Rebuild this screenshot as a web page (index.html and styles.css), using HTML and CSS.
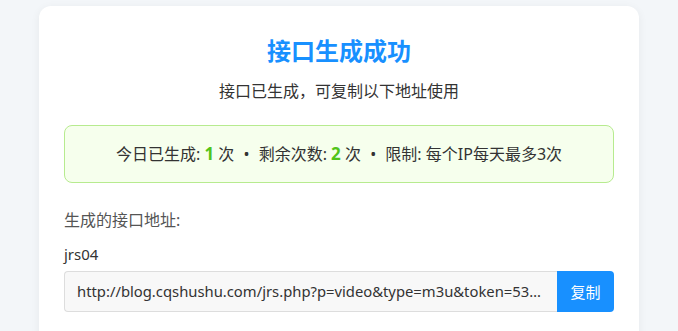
FILE: index.html
```html
<!DOCTYPE html>
<html lang="zh-CN">
<head>
<meta charset="utf-8">
<title>接口生成成功</title>
<link rel="stylesheet" href="styles.css">
</head>
<body>
<div class="card">
  <h1 class="title">接口生成成功</h1>
  <p class="subtitle">接口已生成，可复制以下地址使用</p>
  <div class="stats">今日已生成: <b class="num">1</b> 次 <span class="dot">•</span> 剩余次数: <b class="num">2</b> 次 <span class="dot">•</span> 限制: 每个IP每天最多3次</div>
  <div class="label">生成的接口地址:</div>
  <div class="name">jrs04</div>
  <div class="row">
    <div class="url">http://blog.cqshushu.com/jrs.php?p=video&amp;type=m3u&amp;token=53f8a1c9e2b74d06a1f3c5e7b9d2a4c6</div>
    <button class="copy">复制</button>
  </div>
</div>
</body>
</html>
```
FILE: styles.css
```css
html, body {
  margin: 0;
  padding: 0;
  background: #f3f6f9;
  font-family: "Noto Sans", "Noto Sans CJK SC", sans-serif;
  color: #333;
}
.card {
  width: 600px;
  margin: 6px auto 0;
  background: #fff;
  border-radius: 12px;
  box-shadow: 0 2px 10px rgba(0, 0, 0, 0.06);
  padding: 27px 25px 40px;
  box-sizing: border-box;
  min-height: 400px;
}
.title {
  margin: 0;
  font-size: 24px;
  line-height: 36px;
  font-weight: 700;
  color: #1890ff;
  text-align: center;
}
.subtitle {
  margin: 10px 0 0;
  font-size: 16px;
  line-height: 24px;
  text-align: center;
  color: #333;
}
.stats {
  margin-top: 22px;
  background: #f6ffed;
  border: 1px solid #b7eb8f;
  border-radius: 8px;
  padding: 15px 10px;
  line-height: 25px;
  font-size: 16px;
  text-align: center;
  color: #333;
}
.num {
  color: #52c41a;
  font-weight: 700;
  font-size: 17px;
}
.dot {
  margin: 0 5px;
}
.label {
  margin-top: 25px;
  font-size: 16px;
  line-height: 24px;
  color: #555;
}
.name {
  margin-top: 11px;
  font-size: 15px;
  line-height: 22px;
  color: #333;
}
.row {
  display: flex;
  margin-top: 6px;
  height: 41px;
}
.url {
  flex: 1;
  min-width: 0;
  box-sizing: border-box;
  border: 1px solid #ddd;
  border-right: none;
  border-radius: 4px 0 0 4px;
  background: #f8f8f8;
  padding: 0 12px;
  font-size: 14.8px;
  line-height: 39px;
  color: #333;
  white-space: nowrap;
  overflow: hidden;
  text-overflow: ellipsis;
}
.copy {
  width: 57px;
  border: none;
  border-radius: 0 4px 4px 0;
  background: #1890ff;
  color: #fff;
  font-family: inherit;
  font-size: 15px;
  padding: 0;
}
```
